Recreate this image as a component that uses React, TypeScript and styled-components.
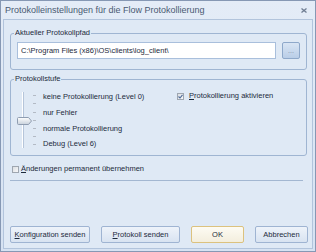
import React from "react";
import styled, { createGlobalStyle } from "styled-components";

const GlobalStyle = createGlobalStyle`
  html, body {
    margin: 0;
    padding: 0;
    background: #ffffff;
  }
  body {
    font-family: "Liberation Sans", Arial, sans-serif;
  }
`;

const ScWindow = styled.div`
  width: 316px;
  height: 252px;
  box-sizing: border-box;
  border: 1px solid #8698b4;
  background: linear-gradient(#e4ecf7, #d6e2f2);
  display: flex;
  flex-direction: column;
`;

const ScTitleBar = styled.div`
  height: 18px;
  display: flex;
  align-items: center;
  justify-content: space-between;
  padding: 0 8px 0 4px;
`;

const ScTitle = styled.span`
  font-size: 9px;
  color: #4a5a72;
  white-space: nowrap;
`;

const ScBody = styled.div`
  flex: 1;
  margin: 0 2px 2px;
  border: 1px solid #b2c4dc;
  background: #dfe9f5;
  display: flex;
  flex-direction: column;
  color: #1d2a3c;
  font-size: 7.5px;
`;

const ScGroup = styled.fieldset<{ $top: number; $pad: string }>`
  margin: ${(p) => p.$top}px 5px 0 6px;
  padding: ${(p) => p.$pad};
  border: 1px solid #9fb5d2;
  border-radius: 3px;
  min-width: 0;
`;

const ScLegend = styled.legend`
  padding: 0 1px;
  margin-left: -3px;
  line-height: 10px;
  font-size: 7.5px;
  color: #1d2a3c;
`;

const ScPathRow = styled.div`
  display: flex;
  gap: 6px;
`;

const ScPathInput = styled.input`
  width: 259px;
  height: 17px;
  box-sizing: border-box;
  border: 1px solid #a9bfdc;
  background: #ffffff;
  padding: 0 3px;
  margin: 0;
  font-family: "Liberation Sans", Arial, sans-serif;
  font-size: 7.5px;
  color: #1d2a3c;
  outline: none;
`;

const ScBrowseButton = styled.div`
  width: 18px;
  height: 17px;
  box-sizing: border-box;
  border: 1px solid #8ea8ca;
  border-radius: 2px;
  background: linear-gradient(#d9e5f4, #b9cde7);
  display: flex;
  align-items: center;
  justify-content: center;
  font-size: 7px;
  color: #7b8ca4;
  padding-bottom: 1px;
`;

const ScLevelGrid = styled.div`
  display: grid;
  grid-template-columns: 26px 134px 1fr;
  grid-template-rows: repeat(4, 15.75px);
`;

const ScSlider = styled.svg`
  grid-column: 1;
  grid-row: 1 / 5;
  display: block;
`;

const ScLevelLabel = styled.div`
  grid-column: 2;
  line-height: 15.75px;
  white-space: nowrap;
`;

const ScCheckRow = styled.label<{ $gap: number }>`
  display: flex;
  align-items: center;
  gap: ${(p) => p.$gap}px;
  line-height: 10px;
  white-space: nowrap;
`;

const ScLevelCheck = styled(ScCheckRow)`
  grid-column: 3;
  grid-row: 1;
  align-self: start;
  margin-top: 2px;
`;

const ScPermanentRow = styled(ScCheckRow)`
  margin: 8px 0 0 8px;
`;

const ScBox = styled.span`
  width: 7px;
  height: 7px;
  box-sizing: border-box;
  border: 1px solid #9ea6b0;
  background: linear-gradient(135deg, #dcdfe3, #f7f8f9);
  display: flex;
  align-items: center;
  justify-content: center;
`;

const ScSeparator = styled.div`
  height: 1px;
  margin: 6px 9px 0 6px;
  background: #a3b7d1;
`;

const ScButtonBar = styled.div`
  margin-top: auto;
  padding: 0 4px 5px 6px;
  display: flex;
  justify-content: space-between;
`;

const ScButton = styled.div<{ $width: number; $default?: boolean }>`
  width: ${(p) => p.$width}px;
  height: 17px;
  box-sizing: border-box;
  border: 1px solid ${(p) => (p.$default ? "#dcc27e" : "#9fb4d2")};
  border-radius: 2px;
  background: ${(p) =>
    p.$default
      ? "linear-gradient(#fdfbf3, #f3eedd)"
      : "linear-gradient(#eef3fa, #d8e3f1)"};
  display: flex;
  align-items: center;
  justify-content: center;
  white-space: nowrap;
  color: #1d2a3c;
`;

const Key = styled.u`
  text-underline-offset: 1px;
`;

const CloseIcon = () => (
  <svg width="6" height="5" viewBox="0 0 6 5">
    <path d="M0.5 0.5 L5.5 4.5 M5.5 0.5 L0.5 4.5" stroke="#6f7d92" strokeWidth="1.3" />
  </svg>
);

const Check = () => (
  <svg width="5" height="5" viewBox="0 0 5 5">
    <path d="M0.5 2.5 L2 4 L4.5 0.8" stroke="#4a6896" strokeWidth="1.1" fill="none" />
  </svg>
);

const ticks = [6, 14, 23, 31, 39, 47, 55];

const LevelSlider = () => (
  <ScSlider width="22" height="63" viewBox="0 0 22 63">
    <defs>
      <linearGradient id="thumb" x1="0" y1="0" x2="0" y2="1">
        <stop offset="0" stopColor="#ffffff" />
        <stop offset="1" stopColor="#c8d1dc" />
      </linearGradient>
    </defs>
    <rect x="5" y="3" width="1" height="56" fill="#ffffff" />
    <rect x="6" y="3" width="1" height="56" fill="#b6c5da" />
    {ticks.map((y) => (
      <rect key={y} x="16" y={y} width="3" height="1" fill="#b3bac5" />
    ))}
    <path
      d="M1.5 28.5 H11.5 L14.5 32 L11.5 35.5 H1.5 Q0.5 35.5 0.5 34.5 V29.5 Q0.5 28.5 1.5 28.5 Z"
      fill="url(#thumb)"
      stroke="#8f9db1"
    />
  </ScSlider>
);

const levels = [
  "keine Protokollierung (Level 0)",
  "nur Fehler",
  "normale Protokollierung",
  "Debug (Level 6)",
];

const App = () => (
  <>
    <GlobalStyle />
    <ScWindow>
      <ScTitleBar>
        <ScTitle>Protokolleinstellungen für die Flow Protokollierung</ScTitle>
        <CloseIcon />
      </ScTitleBar>
      <ScBody>
        <ScGroup $top={8} $pad="4px 6px 10px 6px">
          <ScLegend>Aktueller Protokollpfad</ScLegend>
          <ScPathRow>
            <ScPathInput readOnly value={"C:\\Program Files (x86)\\OS\\clients\\log_client\\"} />
            <ScBrowseButton>...</ScBrowseButton>
          </ScPathRow>
        </ScGroup>
        <ScGroup $top={4} $pad="5px 6px 3px 6px">
          <ScLegend>Protokollstufe</ScLegend>
          <ScLevelGrid>
            <LevelSlider />
            {levels.map((l) => (
              <ScLevelLabel key={l}>{l}</ScLevelLabel>
            ))}
            <ScLevelCheck $gap={5}>
              <ScBox>
                <Check />
              </ScBox>
              <span>
                <Key>P</Key>rotokollierung aktivieren
              </span>
            </ScLevelCheck>
          </ScLevelGrid>
        </ScGroup>
        <ScPermanentRow $gap={2}>
          <ScBox />
          <span>
            <Key>Ä</Key>nderungen permanent übernehmen
          </span>
        </ScPermanentRow>
        <ScSeparator />
        <ScButtonBar>
          <ScButton $width={80}>
            <span>
              <Key>K</Key>onfiguration senden
            </span>
          </ScButton>
          <ScButton $width={79}>
            <span>
              <Key>P</Key>rotokoll senden
            </span>
          </ScButton>
          <ScButton $width={53} $default>
            OK
          </ScButton>
          <ScButton $width={53}>Abbrechen</ScButton>
        </ScButtonBar>
      </ScBody>
    </ScWindow>
  </>
);

export default App;
